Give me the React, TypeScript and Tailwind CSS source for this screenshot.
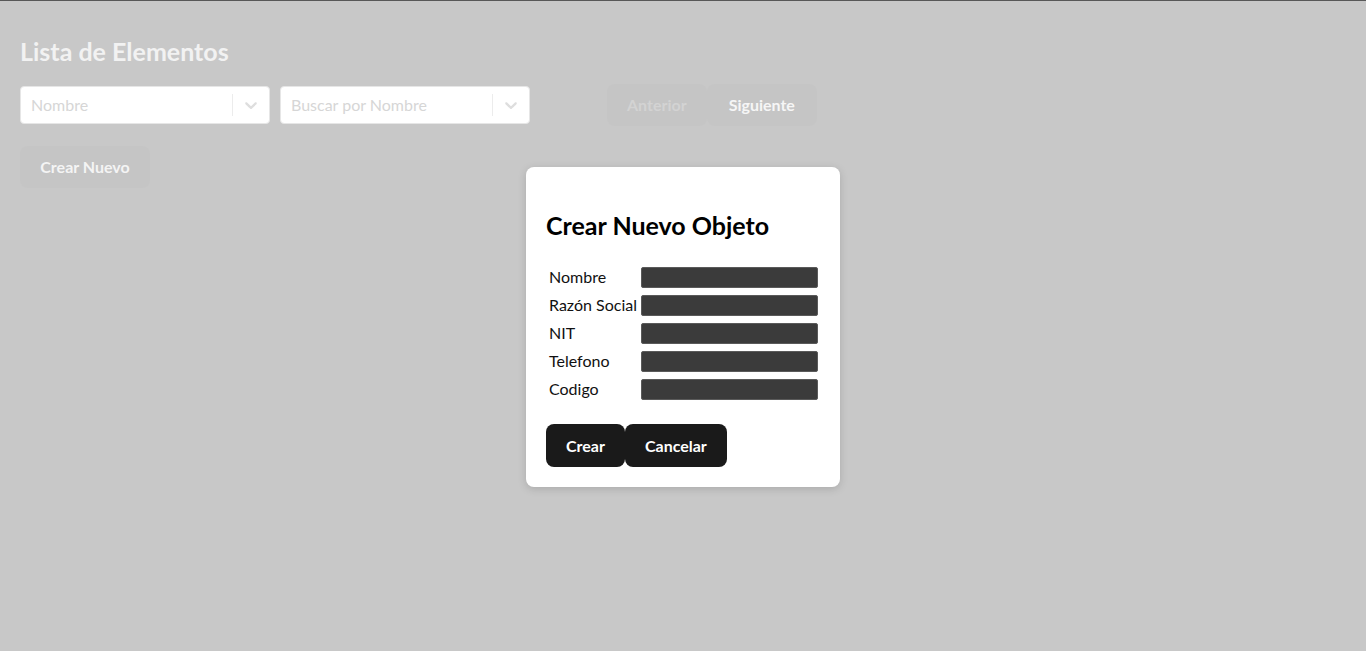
import React from 'react';

const font = { fontFamily: 'Lato, "Noto Sans", sans-serif' };

function Chevron() {
  return (
    <svg width="20" height="20" viewBox="0 0 20 20" className="fill-[#dedede]">
      <path d="M4.516 7.548c0.436-0.446 1.043-0.481 1.576 0l3.908 3.747 3.908-3.747c0.533-0.481 1.141-0.446 1.574 0 0.436 0.445 0.408 1.197 0 1.615-0.406 0.418-4.695 4.502-4.695 4.502-0.217 0.223-0.502 0.335-0.787 0.335s-0.57-0.112-0.789-0.335c0 0-4.287-4.084-4.695-4.502s-0.436-1.17 0-1.615z" />
    </svg>
  );
}

function FakeSelect({ placeholder }: { placeholder: string }) {
  return (
    <div className="flex h-[38px] w-[250px] items-center rounded-[4px] border border-[#e6e6e6] bg-white">
      <div className="flex-1 px-[10px] text-[16px] text-[#d6d6d6]">{placeholder}</div>
      <span className="h-[22px] w-px bg-[#ececec]" />
      <div className="px-[8px]">
        <Chevron />
      </div>
    </div>
  );
}

const fields = ['Nombre', 'Razón Social', 'NIT', 'Telefono', 'Codigo'];

export default function App() {
  return (
    <div style={font} className="relative min-h-[651px] w-full border-t border-[#585858] bg-[#c8c8c8]">
      <div className="px-[20px] pt-[32px]">
        <h1 className="text-[25px] font-bold leading-[36px] text-[#f2f2f2]">Lista de Elementos</h1>
        <div className="mt-[15px] flex items-center">
          <div className="flex gap-[10px]">
            <FakeSelect placeholder="Nombre" />
            <FakeSelect placeholder="Buscar por Nombre" />
          </div>
          <div className="ml-[77px] flex">
            <button className="h-[42px] rounded-[8px] bg-[#c5c5c5] px-[20px] text-[16px] font-bold text-[#d3d3d3]">
              Anterior
            </button>
            <button className="h-[42px] rounded-[8px] bg-[#c5c5c5] px-[22px] text-[16px] font-bold text-[#f6f6f6]">
              Siguiente
            </button>
          </div>
        </div>
        <button className="mt-[20px] h-[42px] w-[130px] rounded-[8px] bg-[#c5c5c5] text-[16px] font-bold text-[#f4f4f4]">
          Crear Nuevo
        </button>
      </div>

      <div className="absolute left-[526px] top-[166px] w-[314px] rounded-[8px] bg-white px-[20px] pb-[20px] pt-[40px] shadow-[0_2px_8px_rgba(0,0,0,0.15)]">
        <h2 className="text-[25px] font-bold leading-[36px] text-black">Crear Nuevo Objeto</h2>
        <div className="mt-[24px] flex flex-col gap-[8px] pl-[3px]">
          {fields.map((f) => (
            <div key={f} className="flex h-[20px] items-center">
              <span className="w-[92px] whitespace-nowrap text-[16px] leading-[20px] text-[#111]">{f}</span>
              <div className="h-[21px] w-[177px] rounded-[2px] border border-[#5a5a5a] bg-[#3b3b3b]" />
            </div>
          ))}
        </div>
        <div className="mt-[25px] flex">
          <button className="h-[43px] rounded-[8px] bg-[#1a1a1a] px-[20px] text-[16px] font-bold text-white">Crear</button>
          <button className="h-[43px] rounded-[8px] bg-[#1a1a1a] px-[20px] text-[16px] font-bold text-white">Cancelar</button>
        </div>
      </div>
    </div>
  );
}
